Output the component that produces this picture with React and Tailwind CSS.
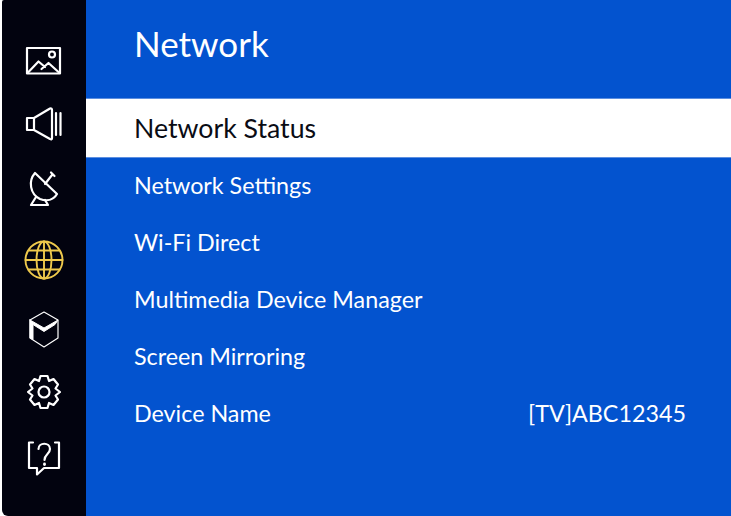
const Icon = ({ children, mt, w = 40, h = 40, color = "#ffffff", sw = 2.2, className = "" }) => (
  <svg width={w} height={h} viewBox="0 0 40 40" fill="none" stroke={color} strokeWidth={sw} strokeLinejoin="round" strokeLinecap="round" className={`block shrink-0 ${className}`} style={{ marginTop: mt }}>
    {children}
  </svg>
);

const rows = [
  ["Network Settings"],
  ["Wi-Fi Direct"],
  ["Multimedia Device Manager"],
  ["Screen Mirroring"],
  ["Device Name", "[TV]ABC12345"],
];

export default function App() {
  return (
    <div className="flex w-[731px] h-[516px] overflow-hidden bg-white font-['Lato','Noto_Sans',sans-serif]">
      <div className="w-[84px] ml-[2px] shrink-0 bg-[#02030f] rounded-bl-[6px] rounded-tl-[2px] flex flex-col items-center">
        <div className="flex flex-col items-center">
          <Icon mt={46}>
            <rect x="3" y="2" width="33" height="25.5" />
            <path d="M4 26.5 L14.5 15.5 L21 21 M17.5 23 L24.5 17 L35 26.5" />
            <circle cx="28" cy="8.5" r="3" />
          </Icon>
          <Icon mt={19}>
            <path d="M3 13 H10 V25 H3 Z M10 13 L26 3.5 Q28 3 28 5 V33 Q28 35 26 34 L10 25" />
            <path d="M32 8 V30 M36.5 8 V30" />
          </Icon>
          <Icon mt={24}>
            <path d="M11 4 C4 12 6 25 16 30 C24 33 30 30 33 25 Z" />
            <path d="M21 15 L28 6 M27 3.5 L30.5 7" />
            <path d="M12 28 L7 36 H24 L21 31" />
          </Icon>
          <Icon mt={31} color="#eec94c" sw={1.9}>
            <circle cx="20" cy="20" r="18.5" />
            <ellipse cx="20" cy="20" rx="7.5" ry="18.5" />
            <path d="M20 1.5 V38.5 M1.5 20 H38.5 M4.5 10.5 H35.5 M4.5 29.5 H35.5" />
          </Icon>
          <Icon mt={30}>
            <path d="M20 2 L34 10 V28 L20 37 L6 28 V10 Z" strokeWidth="1.2" />
            <path d="M6 10 V28 L9 29.5 V14.5 L20 21.5 L31 14.5 L34 10 L20 18 L6 10 Z" fill="#fff" strokeWidth="1" />
          </Icon>
          <Icon mt={22}>
            <path d="M16.5 4 H23.5 L25 9 L29.5 7 L34 12.5 L31.5 16.5 L36 20 L31.5 23.5 L34 27.5 L29.5 33 L25 31 L23.5 36 H16.5 L15 31 L10.5 33 L6 27.5 L8.5 23.5 L4 20 L8.5 16.5 L6 12.5 L10.5 7 L15 9 Z" />
            <circle cx="20" cy="20" r="5.5" />
          </Icon>
          <Icon mt={26}>
            <path d="M9 4.5 H5 V30 H13 V36.5 L20 30 H35 V4.5 H31" />
            <path d="M14.5 11 C14.5 4 26 4 26 11 C26 16 20.5 16 20.5 22" />
            <path d="M20.5 26 V26.5" strokeWidth="2.8" />
          </Icon>
        </div>
      </div>
      <div className="flex-1 bg-[#0353cf] flex flex-col text-white">
        <div className="h-[98px] pl-[48px] pt-[19px] text-[35px] leading-[48px]">Network</div>
        <div className="h-[60px] bg-white text-[#0a0c14] pl-[48px] flex items-center text-[26.7px] border-y border-[#5d8fe0]">
          Network Status
        </div>
        {rows.map(([label, value]) => (
          <div key={label} className="h-[57px] pl-[48px] pr-[45px] pb-[3px] flex items-center justify-between text-[23.3px]">
            <span>{label}</span>
            {value && <span>{value}</span>}
          </div>
        ))}
      </div>
    </div>
  );
}
